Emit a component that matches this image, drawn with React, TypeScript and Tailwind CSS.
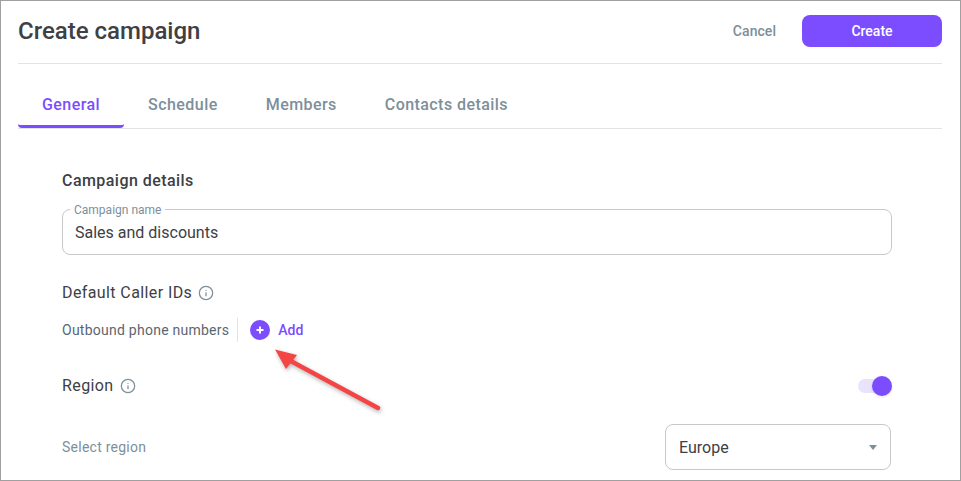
import { Info } from 'lucide-react';

const tabs = ['General', 'Schedule', 'Members', 'Contacts details'];

const InfoIcon = () => <Info size={16} strokeWidth={1.9} className="text-[#7c8f9b]" />;

const App = () => {
  return (
    <div className="relative h-[481px] w-[961px] overflow-hidden border border-[#a0a0a0] bg-white font-['Roboto',sans-serif] text-[#3f3f46]">
      <header className="mr-[18px] ml-[17px] flex h-[63px] items-center justify-between border-b border-[#e3e3e3] pb-[2px]">
        <h1 className="text-2xl font-medium text-[#3d4045]">Create campaign</h1>
        <div className="flex items-center gap-[26px]">
          <span className="text-sm font-medium tracking-[0.05px] text-[#7c8f9b]">Cancel</span>
          <button className="h-8 w-[140px] rounded-lg bg-[#7c4dff] text-sm font-medium text-white">Create</button>
        </div>
      </header>

      <nav className="mr-[18px] ml-[17px] flex h-[65px] border-b border-[#e3e3e3]">
        {tabs.map((tab, index) => (
          <div
            key={tab}
            className={`flex items-center border-b-[3px] px-6 pt-5 text-base font-medium tracking-[0.44px] ${
              index === 0 ? 'rounded-b-sm border-[#7c4dff] text-[#7c4dff]' : 'border-transparent text-[#7c8f9b]'
            }`}
          >
            {tab}
          </div>
        ))}
      </nav>

      <main className="ml-[61px] w-[830px] pt-[42px]">
        <h2 className="text-base leading-[20px] font-medium tracking-[0.45px] text-[#3d4045]">Campaign details</h2>

        <div className="relative mt-[18px] flex h-[46px] items-center rounded-lg border border-[#c8c8c8] px-3 pt-[1px]">
          <span className="absolute top-[-7px] left-[7px] bg-white px-1 text-xs leading-[14px] text-[#7c8f9b]">Campaign name</span>
          <span className="text-base text-[#3d4045]">Sales and discounts</span>
        </div>

        <div className="mt-[28px] flex h-5 items-center gap-[6px]">
          <span className="text-base tracking-[0.4px] text-[#3d4045]">Default Caller IDs</span>
          <InfoIcon />
        </div>

        <div className="mt-[15px] flex h-[24px] items-center">
          <span className="text-sm tracking-[0.25px] text-[#5c6670]">Outbound phone numbers</span>
          <div className="mx-[8px] h-[24px] w-px bg-[#e3e3e3]" />
          <div className="ml-[4px] flex size-5 items-center justify-center rounded-full bg-[#7c4dff]">
            <svg width="10" height="10" viewBox="0 0 10 10" stroke="white" strokeWidth="2">
              <path d="M5 1.5v7M1.5 5h7" />
            </svg>
          </div>
          <span className="ml-2 text-sm font-medium text-[#7c4dff]">Add</span>
        </div>

        <div className="mt-[32px] flex h-6 items-center justify-between">
          <div className="flex items-center gap-[6px]">
            <span className="text-base tracking-[0.4px] text-[#3d4045]">Region</span>
            <InfoIcon />
          </div>
          <div className="relative h-[14px] w-[34px] rounded-full bg-[#e9e3fd]">
            <div className="absolute top-[-3px] right-0 size-5 rounded-full bg-[#7c4dff] shadow-sm" />
          </div>
        </div>

        <div className="mt-[26px] flex items-center justify-between pr-px">
          <span className="text-sm tracking-[0.25px] text-[#7c8f9b]">Select region</span>
          <div className="flex h-[46px] w-[226px] items-center justify-between rounded-lg border border-[#c8c8c8] px-[13px] pt-[1px]">
            <span className="text-base text-[#3d4045]">Europe</span>
            <div className="h-0 w-0 border-x-[4px] border-t-[5px] border-x-transparent border-t-[#7c8f9b]" />
          </div>
        </div>
      </main>

      <svg className="absolute top-[346px] left-[272px]" width="112" height="70" viewBox="0 0 112 70" fill="none">
        <g className="drop-shadow-[1px_2px_2px_rgba(0,0,0,0.3)]">
          <path d="M105 61 L14 12" stroke="#f44545" strokeWidth="4.5" strokeLinecap="round" />
          <path d="M2 2.5 L24 8 L13 22 Z" fill="#f44545" />
        </g>
      </svg>
    </div>
  );
};

export default App;
